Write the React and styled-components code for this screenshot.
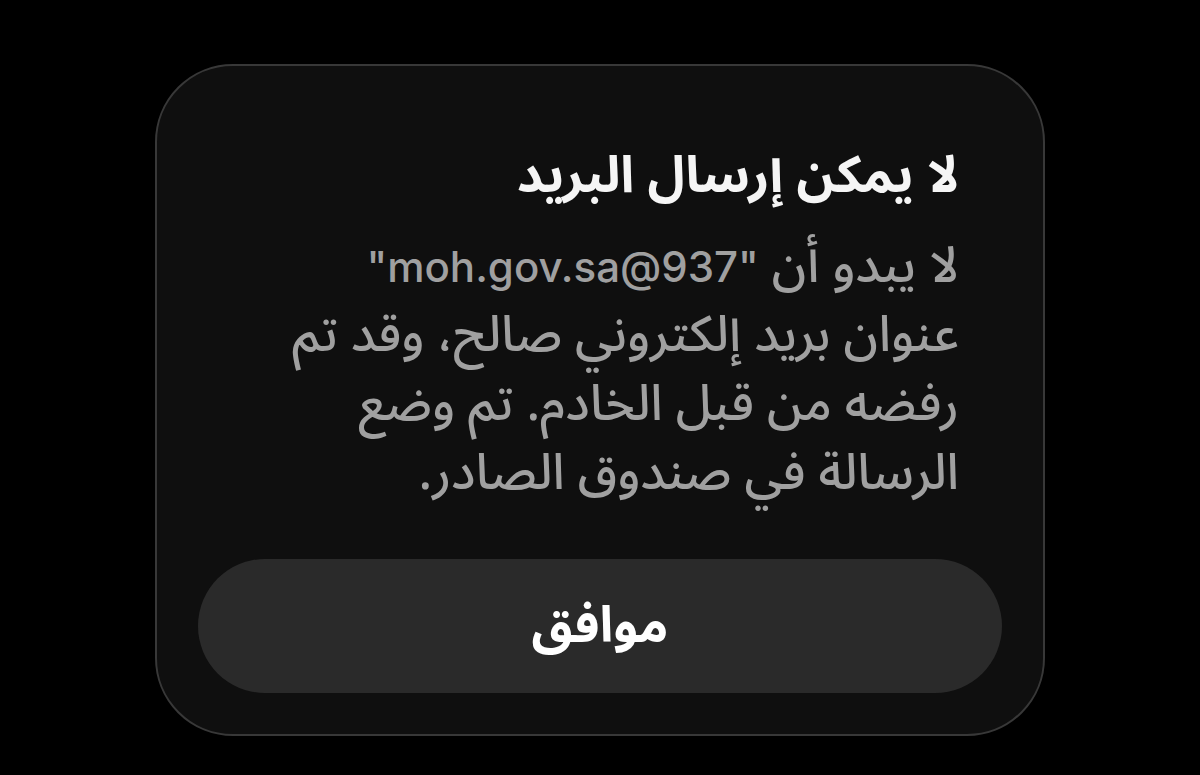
import React from 'react';
import styled, { createGlobalStyle } from 'styled-components';

const GlobalStyle = createGlobalStyle`
  html, body {
    margin: 0;
    padding: 0;
    background: #000000;
  }
  body {
    width: 1200px;
    height: 775px;
    overflow: hidden;
    font-family: 'Noto Sans Arabic', 'DejaVu Sans', 'Noto Sans', sans-serif;
  }
`;

const Screen = styled.main`
  display: flex;
  justify-content: center;
  padding-top: 64px;
`;

const Alert = styled.section`
  box-sizing: border-box;
  width: 890px;
  height: 672px;
  background: #0f0f0f;
  border: 2px solid #383838;
  border-radius: 78px;
  padding: 75px 41px 41px;
  display: flex;
  flex-direction: column;
  direction: rtl;
`;

const Content = styled.div`
  padding: 0 43px;
  display: flex;
  flex-direction: column;
  gap: 21px;
  flex: 1;
`;

const Title = styled.h2`
  margin: 0;
  font-size: 51px;
  line-height: 70px;
  font-weight: 700;
  color: #f5f5f5;
  text-align: right;
`;

const Message = styled.p`
  margin: 0;
  font-size: 50px;
  line-height: 69px;
  font-weight: 500;
  color: #a0a0a0;
  text-align: right;
`;

const Latin = styled.span`
  font-family: 'Inter', 'Liberation Sans', sans-serif;
  font-size: 42px;
  font-weight: 500;
`;

const OkButton = styled.button`
  width: 100%;
  height: 134px;
  border: none;
  border-radius: 67px;
  background: #2a2a2a;
  color: #ffffff;
  font-family: inherit;
  font-size: 50px;
  line-height: 1;
  font-weight: 700;
  padding: 0;
  cursor: pointer;
`;

export default function App() {
  return (
    <>
      <GlobalStyle />
      <Screen>
        <Alert role="alertdialog">
          <Content>
            <Title>لا يمكن إرسال البريد</Title>
            <Message>
              لا يبدو أن <Latin>"moh.gov.sa@937"</Latin>
              <br />
              عنوان بريد إلكتروني صالح، وقد تم
              <br />
              رفضه من قبل الخادم. تم وضع
              <br />
              الرسالة في صندوق الصادر.
            </Message>
          </Content>
          <OkButton>موافق</OkButton>
        </Alert>
      </Screen>
    </>
  );
}
